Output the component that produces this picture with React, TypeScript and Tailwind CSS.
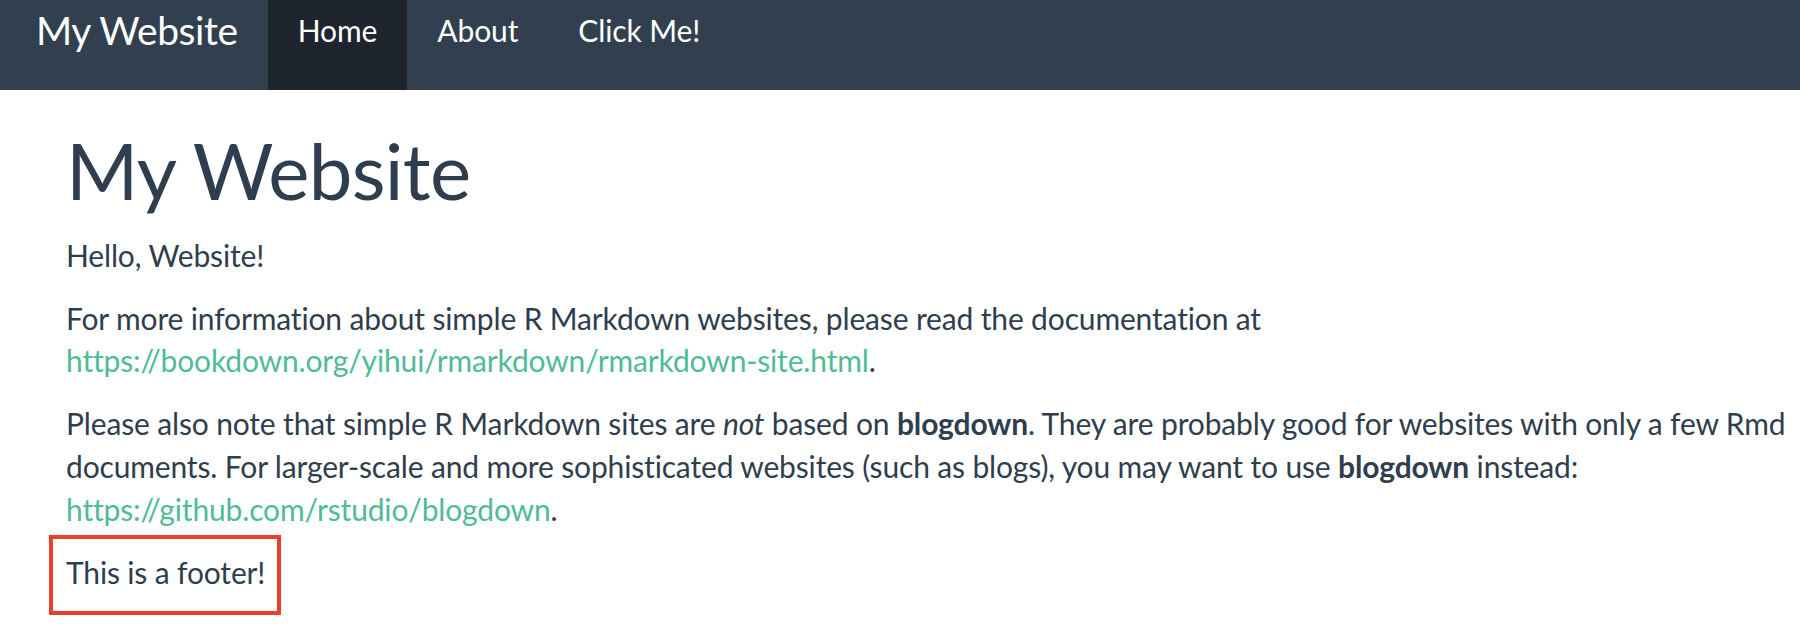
import React from "react"

const NavItem = ({ label, active }: { label: string; active?: boolean }) => (
  <li className={active ? "h-full bg-[#1e252e] px-[30px] pt-[10px]" : "h-full px-[30px] pt-[10px]"}>
    <a href="#" className="text-[30px] leading-[40px] tracking-[-0.1px] text-white">
      {label}
    </a>
  </li>
)

export default function App() {
  return (
    <div className="min-h-[624px] bg-white font-['Lato',sans-serif] text-[#2f3e4e]">
      <nav className="flex h-[90px] items-start bg-[#323f4f]">
        <a href="#" className="ml-[6px] px-[30px] pt-[10px] text-[39px] leading-[40px] tracking-[-0.4px] text-white">
          My Website
        </a>
        <ul className="flex h-full">
          <NavItem label="Home" active />
          <NavItem label="About" />
          <NavItem label="Click Me!" />
        </ul>
      </nav>

      <main className="pl-[66px] pr-[10px] text-[30px] leading-[1.42857] tracking-[-0.15px]">
        <h1 className="mt-[38px] mb-5 text-[78px] leading-[1.1] font-normal tracking-[-0.7px]">My Website</h1>
        <p className="mb-5">Hello, Website!</p>
        <p className="mb-5">
          For more information about simple R Markdown websites, please read the documentation at{" "}
          <a href="#" className="text-[#4fbb97]">
            https://bookdown.org/yihui/rmarkdown/rmarkdown-site.html
          </a>
          .
        </p>
        <p className="mb-5">
          Please also note that simple R Markdown sites are <em>not</em> based on <strong>blogdown</strong>. They
          are probably good for websites with only a few Rmd documents. For larger-scale and more sophisticated
          websites (such as blogs), you may want to use <strong>blogdown</strong> instead:{" "}
          <a href="#" className="text-[#4fbb97]">
            https://github.com/rstudio/blogdown
          </a>
          .
        </p>
        <div className="-mt-[16px] -ml-[17px] w-fit border-4 border-[#e8412a] pt-3 pr-3 pb-[17px] pl-[13px]">
          This is a footer!
        </div>
      </main>
    </div>
  )
}
